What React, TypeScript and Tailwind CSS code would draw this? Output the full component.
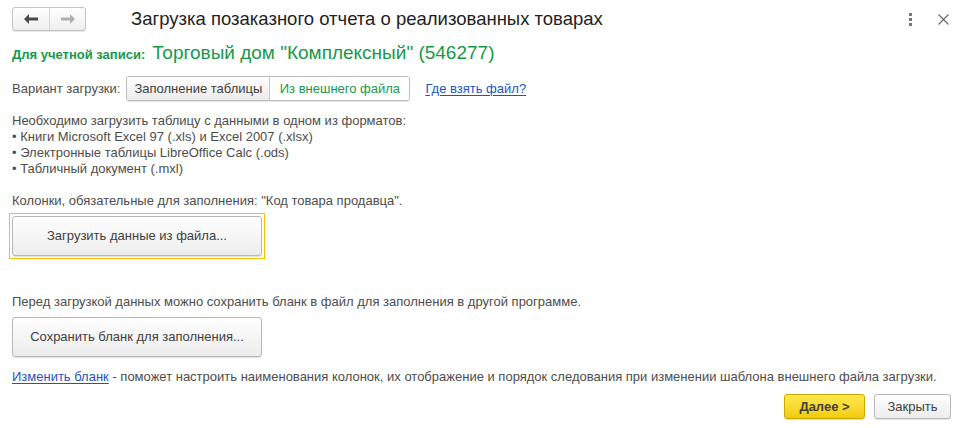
const btn =
  'flex items-center justify-center border border-[#b8b8b8] rounded-[3px] bg-gradient-to-b from-white to-[#ececec] shadow-[0_1px_1px_rgba(0,0,0,0.12)] text-[#404040]'

export default function App() {
  return (
    <div className="w-[968px] h-[428px] bg-white text-[13px] text-[#4d4d4d] font-['Liberation_Sans',Arial,sans-serif] flex flex-col pl-3 overflow-hidden">
      {/* header */}
      <div className="flex items-center pt-[7px] h-[31px]">
        <div className="flex h-[24px] w-[74px] border border-[#c4c4c4] rounded-[3px] bg-gradient-to-b from-white to-[#eeeeee] shadow-[0_1px_1px_rgba(0,0,0,0.1)]">
          <div className="w-[37px] flex items-center justify-center border-r border-[#d6d6d6]">
            <svg width="14" height="10" viewBox="0 0 14 10">
              <path d="M0 5 L5 0 L5 3.5 L14 3.5 L14 6.5 L5 6.5 L5 10 Z" fill="#4a4a4a" />
            </svg>
          </div>
          <div className="flex-1 flex items-center justify-center">
            <svg width="14" height="10" viewBox="0 0 14 10">
              <path d="M14 5 L9 0 L9 3.5 L0 3.5 L0 6.5 L9 6.5 L9 10 Z" fill="#b0b0b0" />
            </svg>
          </div>
        </div>
        <div className="ml-[45px] text-[18.5px] text-[#222] leading-[24px]">Загрузка позаказного отчета о реализованных товарах</div>
        <div className="ml-auto flex items-center">
          <div className="flex flex-col gap-[2px] w-[3px] mr-[26px]">
            <span className="w-[3px] h-[3px] bg-[#777]" />
            <span className="w-[3px] h-[3px] bg-[#777]" />
            <span className="w-[3px] h-[3px] bg-[#777]" />
          </div>
          <svg width="11" height="11" viewBox="0 0 11 11" className="mr-[19px]">
            <path d="M0.5 0.5 L10.5 10.5 M10.5 0.5 L0.5 10.5" stroke="#666" strokeWidth="1.1" />
          </svg>
        </div>
      </div>

      {/* account */}
      <div className="flex items-baseline mt-[12px] leading-[20px] text-[#16994a]">
        <span className="font-bold text-[13px]">Для учетной записи:</span>
        <span className="ml-[7px] text-[19px]">Торговый дом "Комплексный" (546277)</span>
      </div>

      {/* variant */}
      <div className="flex items-center mt-[11px] h-[25px]">
        <span>Вариант загрузки:</span>
        <div className="ml-[6px] flex h-[25px] border border-[#bdbdbd] rounded-[3px] overflow-hidden shadow-[0_1px_1px_rgba(0,0,0,0.1)]">
          <div className="w-[143px] flex items-center justify-center bg-gradient-to-b from-white to-[#ebebeb] border-r border-[#c6c6c6] text-[#404040]">Заполнение таблицы</div>
          <div className="w-[139px] flex items-center justify-center bg-white text-[#16994a]">Из внешнего файла</div>
        </div>
        <a className="ml-[15px] text-[#1b55c0] underline underline-offset-2">Где взять файл?</a>
      </div>

      {/* description */}
      <div className="mt-[12px] leading-[16px]">
        <div>Необходимо загрузить таблицу с данными в одном из форматов:</div>
        <div>• Книги Microsoft Excel 97 (.xls) и Excel 2007 (.xlsx)</div>
        <div>• Электронные таблицы LibreOffice Calc (.ods)</div>
        <div>• Табличный документ (.mxl)</div>
        <div className="h-[16px]" />
        <div>Колонки, обязательные для заполнения: "Код товара продавца".</div>
      </div>

      <div className="mt-[4px] -ml-[3px] w-[256px] border border-[#f5c400] p-[2px]">
        <div className={`${btn} h-[40px] w-[250px]`}>Загрузить данные из файла...</div>
      </div>

      <div className="mt-[35px] leading-[16px]">Перед загрузкой данных можно сохранить бланк в файл для заполнения в другой программе.</div>

      <div className={`${btn} mt-[7px] h-[40px] w-[250px]`}>Сохранить бланк для заполнения...</div>

      <div className="mt-[12px] leading-[16px]">
        <a className="text-[#1b55c0] underline underline-offset-2">Изменить бланк</a>
        <span> - поможет настроить наименования колонок, их отображение и порядок следования при изменении шаблона внешнего файла загрузки.</span>
      </div>

      <div className="mt-[9px] flex justify-end gap-[9px] pr-[17px]">
        <div className="h-[25px] w-[81px] flex items-center justify-center border border-[#c9a800] rounded-[3px] bg-gradient-to-b from-[#ffe94a] to-[#f1cb00] font-bold text-[#404040] shadow-[0_1px_1px_rgba(0,0,0,0.15)]">Далее &gt;</div>
        <div className={`${btn} h-[25px] w-[77px]`}>Закрыть</div>
      </div>
    </div>
  )
}
